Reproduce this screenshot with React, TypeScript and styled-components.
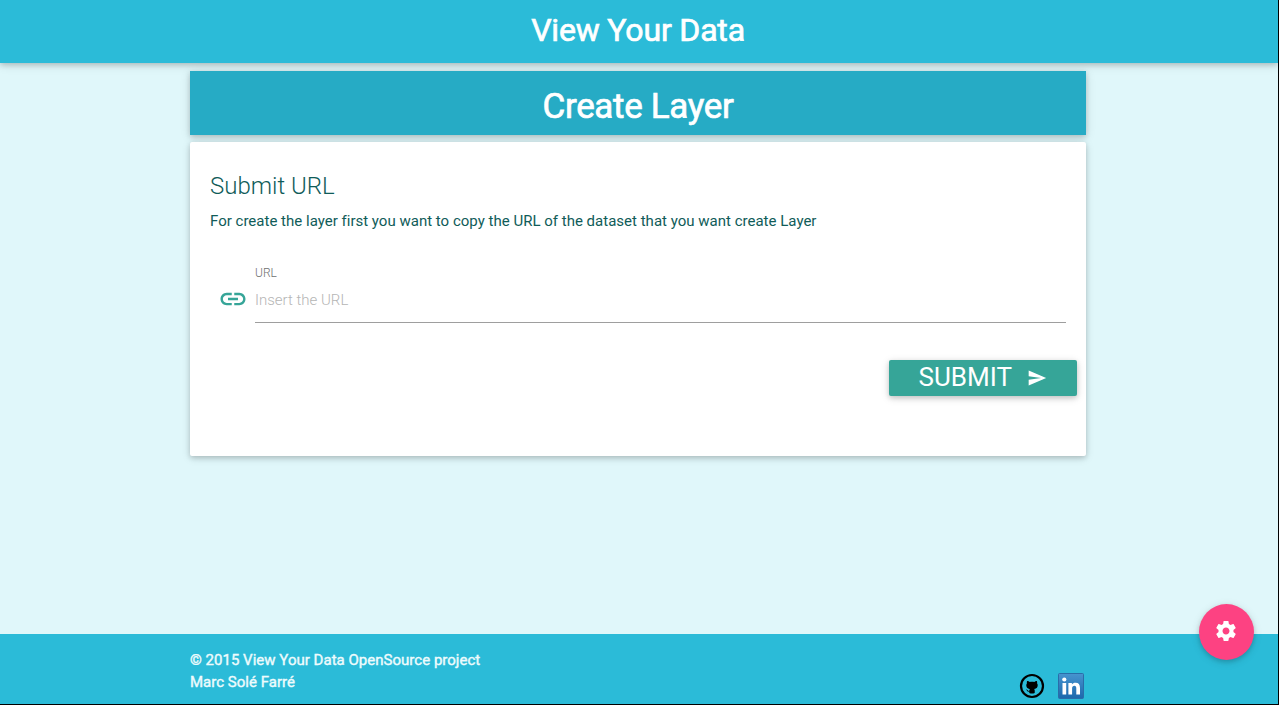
import React from "react";
import styled, { createGlobalStyle } from "styled-components";

const GlobalStyle = createGlobalStyle`
  *, *::before, *::after { box-sizing: border-box; }
  body {
    margin: 0;
    font-family: Roboto, "Liberation Sans", sans-serif;
    font-size: 15px;
    font-weight: 400;
    background: #e0f7fa;
    color: #105c59;
  }
`;

const raised = "0 2px 5px 0 rgba(0, 0, 0, 0.16), 0 2px 10px 0 rgba(0, 0, 0, 0.12)";

const Page = styled.div`
  display: flex;
  flex-direction: column;
  width: 1279px;
  height: 705px;
  overflow: hidden;
  border-right: 1px solid #000;
  border-bottom: 1px solid #000;
  background: #e0f7fa;
`;

const TopBar = styled.header`
  display: flex;
  justify-content: center;
  height: 63px;
  flex: none;
  background: #2bbbd8;
  color: #fff;
  box-shadow: ${raised};
`;

const Brand = styled.h1`
  margin: 0 2px 0 0;
  font-size: 32px;
  font-weight: 400;
  letter-spacing: -0.18px;
  -webkit-text-stroke: 0.7px #fff;
  line-height: 60px;
  white-space: nowrap;
`;

const Main = styled.main`
  flex: 1;
  width: 896px;
  margin-left: 190px;
  padding-top: 8px;
`;

const Banner = styled.div`
  display: flex;
  justify-content: center;
  height: 64px;
  background: #26abc5;
  color: #fff;
  box-shadow: ${raised};
`;

const BannerTitle = styled.h2`
  margin: 0;
  font-size: 35px;
  font-weight: 400;
  letter-spacing: -0.33px;
  -webkit-text-stroke: 0.7px #fff;
  line-height: 71px;
  white-space: nowrap;
`;

const Card = styled.section`
  height: 314px;
  margin-top: 7px;
  padding: 20px;
  border-radius: 2px;
  background: #fff;
  box-shadow: ${raised};
`;

const CardTitle = styled.h3`
  margin: 0;
  font-size: 24px;
  font-weight: 300;
  line-height: 48px;
`;

const Hint = styled.p`
  margin: 0;
  font-size: 15px;
  letter-spacing: 0.01px;
  line-height: 22px;
  white-space: nowrap;
`;

const Field = styled.div`
  display: flex;
  margin: 32px 0 0 8px;
  height: 59px;
`;

const FieldIcon = styled.svg`
  flex: none;
  width: 30px;
  height: 30px;
  margin: 20px 7.5px 0 -0.5px;
  fill: #36a598;
`;

const FieldBody = styled.div`
  flex: 1;
  display: flex;
  flex-direction: column;
`;

const Label = styled.label`
  padding-top: 1px;
  font-size: 12px;
  font-weight: 300;
  line-height: 16px;
  color: #707070;
`;

const Input = styled.input`
  height: 42px;
  width: 100%;
  padding: 0 0 4px;
  border: 0;
  border-bottom: 1px solid #9e9e9e;
  outline: 0;
  background: transparent;
  font: 300 15px Roboto, sans-serif;
  &::placeholder { color: #b5b5b5; opacity: 1; }
`;

const Actions = styled.div`
  display: flex;
  justify-content: flex-end;
  margin: 37px -11px 0 0;
`;

const Submit = styled.button`
  display: flex;
  align-items: center;
  width: 188px;
  height: 36px;
  padding: 0 0 0 29.5px;
  border: 0;
  border-radius: 2px;
  background: #36a598;
  color: #fff;
  font: 400 26px/34px Roboto, sans-serif;
  box-shadow: ${raised};
`;

const SubmitText = styled.span`
  width: 108.5px;
  height: 36px;
  text-align: left;
`;

const SendIcon = styled.svg`
  width: 20px;
  height: 20px;
  fill: #fff;
`;

const Footer = styled.footer`
  display: flex;
  justify-content: space-between;
  height: 70px;
  flex: none;
  padding: 15px 194px 0 190px;
  background: #2bbbd8;
  color: #eefbfd;
`;

const Credits = styled.div`
  font-size: 15px;
  font-weight: 400;
  -webkit-text-stroke: 0.4px #eefbfd;
  letter-spacing: 0.02px;
  line-height: 22px;
  white-space: nowrap;
`;

const Social = styled.div`
  display: flex;
  gap: 13px;
  padding-top: 23px;
`;

const SocialLink = styled.a`
  display: block;
  width: 26px;
  height: 28px;
`;

const Fab = styled.button`
  position: fixed;
  left: 1199px;
  top: 604px;
  display: grid;
  place-items: center;
  width: 55px;
  height: 56px;
  padding: 0 1px 2px 0;
  border: 0;
  border-radius: 50%;
  background: #fd4282;
  box-shadow: ${raised};
`;

export default function App() {
  return (
    <>
      <GlobalStyle />
      <Page>
        <TopBar>
          <Brand>View Your Data</Brand>
        </TopBar>
        <Main>
          <Banner>
            <BannerTitle>Create Layer</BannerTitle>
          </Banner>
          <Card>
            <CardTitle>Submit URL</CardTitle>
            <Hint>For create the layer first you want to copy the URL of the dataset that you want create Layer</Hint>
            <Field>
              <FieldIcon viewBox="0 0 24 24">
                <path d="M3.9 12c0-1.71 1.39-3.1 3.1-3.1h4V7H7c-2.76 0-5 2.24-5 5s2.24 5 5 5h4v-1.9H7c-1.71 0-3.1-1.39-3.1-3.1zM8 13h8v-2H8v2zm9-6h-4v1.9h4c1.71 0 3.1 1.39 3.1 3.1s-1.39 3.1-3.1 3.1h-4V17h4c2.76 0 5-2.24 5-5s-2.24-5-5-5z" />
              </FieldIcon>
              <FieldBody>
                <Label htmlFor="url">URL</Label>
                <Input id="url" placeholder="Insert the URL" />
              </FieldBody>
            </Field>
            <Actions>
              <Submit type="button">
                <SubmitText>SUBMIT</SubmitText>
                <SendIcon viewBox="0 0 24 24">
                  <path d="M2.01 21L23 12 2.01 3 2 10l15 2-15 2z" />
                </SendIcon>
              </Submit>
            </Actions>
          </Card>
        </Main>
        <Footer>
          <Credits>
            <div>© 2015 View Your Data OpenSource project</div>
            <div>Marc Solé Farré</div>
          </Credits>
          <Social>
            <SocialLink aria-label="GitHub">
              <svg width="26" height="28" viewBox="0 0 26 28">
                <circle cx="13" cy="14" r="11" fill="none" stroke="#000" strokeWidth="2.2" />
                <path transform="translate(1.95 2.1) scale(0.85)" d="M7.2 8.2c1.2-.1 2.3.5 3.1 1.1 1.7-.4 3.7-.4 5.4 0 .8-.6 1.9-1.2 3.1-1.1.4 1 .4 1.9.1 2.7 1 1.2 1 2.7.5 4.1-.6 1.6-2 2.3-3.9 2.6.6.6.7 1.2.7 2v2.5c-2 .9-4.4.9-6.4 0v-1.5c-2 .4-2.5-.7-3-1.6-.3-.5-.7-.7-1-.9 1.1-.3 1.7.3 2.2 1 .5.7 1 .8 1.8.6 0-.8.3-1.5.7-2-1.9-.3-3.3-1-3.9-2.7-.5-1.4-.4-2.9.5-4.1-.3-.8-.3-1.7.1-2.7z" fill="#000" />
              </svg>
            </SocialLink>
            <SocialLink aria-label="LinkedIn">
              <svg width="26" height="28" viewBox="0 0 26 28">
                <defs>
                  <linearGradient id="linkedin" x1="0" y1="0" x2="0" y2="1">
                    <stop offset="0" stopColor="#4794cf" />
                    <stop offset="1" stopColor="#1c68ac" />
                  </linearGradient>
                </defs>
                <rect x="0.5" y="1.5" width="25" height="25" rx="1" fill="url(#linkedin)" stroke="#2a6da9" />
                <circle cx="6.3" cy="7.5" r="2.1" fill="#fff" />
                <path d="M4.5 11h3.7v11.5H4.5zM10.4 11h3.5v1.6c.8-1.3 2-1.9 3.7-1.9 3 0 4.4 1.9 4.4 5.2v6.6h-3.7v-6.1c0-1.6-.6-2.6-1.9-2.6-1.5 0-2.3 1-2.3 2.7v6h-3.7z" fill="#fff" />
              </svg>
            </SocialLink>
          </Social>
        </Footer>
        <Fab aria-label="Settings">
          <svg width="24" height="24" viewBox="0 0 24 24" fill="#fff">
            <path d="M19.43 12.98c.04-.32.07-.64.07-.98s-.03-.66-.07-.98l2.11-1.65c.19-.15.24-.42.12-.64l-2-3.46c-.12-.22-.39-.3-.61-.22l-2.49 1c-.52-.4-1.08-.73-1.69-.98l-.38-2.65C14.46 2.18 14.25 2 14 2h-4c-.25 0-.46.18-.49.42l-.38 2.65c-.61.25-1.17.59-1.69.98l-2.49-1c-.23-.09-.49 0-.61.22l-2 3.46c-.13.22-.07.49.12.64l2.11 1.65c-.04.32-.07.65-.07.98s.03.66.07.98l-2.11 1.65c-.19.15-.24.42-.12.64l2 3.46c.12.22.39.3.61.22l2.49-1c.52.4 1.08.73 1.69.98l.38 2.65c.03.24.24.42.49.42h4c.25 0 .46-.18.49-.42l.38-2.65c.61-.25 1.17-.59 1.69-.98l2.49 1c.23.09.49 0 .61-.22l2-3.46c.12-.22.07-.49-.12-.64l-2.11-1.65zM12 15.5c-1.93 0-3.5-1.57-3.5-3.5s1.57-3.5 3.5-3.5 3.5 1.57 3.5 3.5-1.57 3.5-3.5 3.5z" />
          </svg>
        </Fab>
      </Page>
    </>
  );
}
